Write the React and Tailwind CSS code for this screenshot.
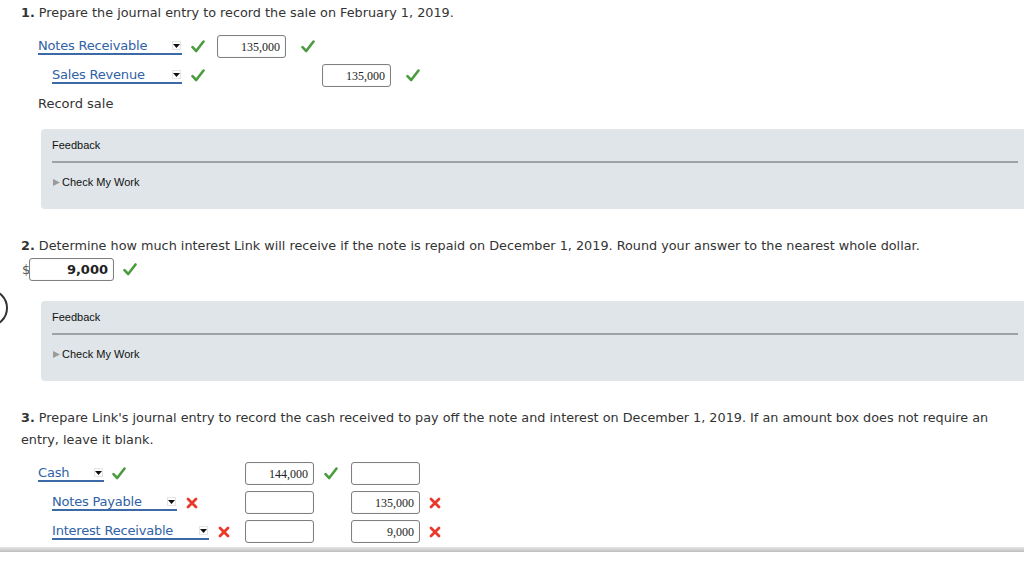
import React from "react";

const Check = () => (
  <svg width="14" height="13" viewBox="0 0 14 13" className="shrink-0">
    <path d="M1.5 7.2 L5.2 11 L12.5 1.5" fill="none" stroke="#4b9b3f" strokeWidth="2.6" strokeLinecap="round" strokeLinejoin="round" />
  </svg>
);

const Cross = () => (
  <svg width="12" height="12" viewBox="0 0 12 12" className="shrink-0">
    <path d="M2 2 L10 10 M10 2 L2 10" fill="none" stroke="#e8392b" strokeWidth="2.8" strokeLinecap="round" />
  </svg>
);

function Select({ label, width }) {
  return (
    <div className={`flex items-center justify-between h-[17px] border-b-2 border-[#3b6aa7] ${width}`}>
      <span className="text-[13px] leading-[15px] text-[#2f62a6] font-['DejaVu_Sans',sans-serif] tracking-[-0.2px]">{label}</span>
      <span className="w-[9px] h-[9px] bg-white border border-[#e4e4e4] flex items-center justify-center mr-[1px]">
        <svg width="7" height="4" viewBox="0 0 7 4"><path d="M0 0 H7 L3.5 4 Z" fill="#111" /></svg>
      </span>
    </div>
  );
}

function Amount({ value, bold }) {
  return (
    <div className={`h-[23px] border border-[#808080] rounded-[3px] bg-white shadow-[inset_0_0_1px_rgba(0,0,0,0.2)] flex items-center justify-end pr-[5px] ${bold ? "w-[85px]" : "w-[69px]"}`}>
      <span className={bold ? "text-[13px] font-bold text-[#222] font-['DejaVu_Sans',sans-serif]" : "text-[12px] text-[#222] font-['Liberation_Serif',serif]"}>{value}</span>
    </div>
  );
}

function Feedback({ className }) {
  return (
    <div className={`ml-[41px] mr-[-10px] h-[80px] bg-[#dfe5e8] rounded-[4px] pl-[11px] pr-[16px] font-['Liberation_Sans',sans-serif] text-[11px] text-[#111] ${className}`}>
      <div className="h-[32px] pt-[10px] leading-[12px]">Feedback</div>
      <div className="border-t-2 border-[#9ea2a5]" />
      <div className="mt-[13px] flex items-center leading-[12px]">
        <svg width="9" height="9" viewBox="0 0 9 9" className="mr-[1px]"><path d="M1 1 L8 4.5 L1 8 Z" fill="#9a9a9a" /></svg>
        Check My Work
      </div>
    </div>
  );
}

export default function App() {
  return (
    <div className="relative w-[1024px] h-[566px] overflow-hidden bg-white text-[#333] font-['DejaVu_Sans',sans-serif] text-[13px]">
      {/* partial circle at left edge */}
      <div className="absolute left-[-30px] top-[289px] w-[38px] h-[38px] rounded-full border-[2.5px] border-[#333]" />

      <div className="pl-[21px] pt-[2px] leading-[22px] text-[12.8px]">
        <b>1.</b> Prepare the journal entry to record the sale on February 1, 2019.
      </div>

      <div className="mt-[11px] flex items-center h-[23px] pl-[38px]">
        <div className="w-[179px] flex items-center">
          <Select label="Notes Receivable" width="w-[144px]" />
          <span className="ml-[9px]"><Check /></span>
        </div>
        <div className="w-[105px] flex items-center">
          <Amount value="135,000" />
          <span className="ml-[15px]"><Check /></span>
        </div>
      </div>

      <div className="mt-[6px] flex items-center h-[23px] pl-[38px]">
        <div className="w-[179px] flex items-center pl-[14px]">
          <Select label="Sales Revenue" width="w-[130px]" />
          <span className="ml-[9px]"><Check /></span>
        </div>
        <div className="w-[105px]" />
        <div className="flex items-center">
          <Amount value="135,000" />
          <span className="ml-[15px]"><Check /></span>
        </div>
      </div>

      <div className="mt-[8px] pl-[38px] leading-[18px]">Record sale</div>

      <Feedback className="mt-[16px]" />

      <div className="mt-[26px] pl-[21px] leading-[22px] text-[12.8px]">
        <b>2.</b> Determine how much interest Link will receive if the note is repaid on December 1, 2019. Round your answer to the nearest whole dollar.
      </div>

      <div className="mt-[1px] flex items-center pl-[22px]">
        <span className="w-[7px] text-[13px] text-[#555]">$</span>
        <Amount value="9,000" bold />
        <span className="ml-[9px]"><Check /></span>
      </div>

      <Feedback className="mt-[20px]" />

      <div className="mt-[26px] pl-[21px] pr-[12px] leading-[22px] text-[12.8px]">
        <b>3.</b> Prepare Link's journal entry to record the cash received to pay off the note and interest on December 1, 2019. If an amount box does not require an entry, leave it blank.
      </div>

      <div className="mt-[11px] flex items-center h-[23px] pl-[38px]">
        <div className="w-[207px] flex items-center">
          <Select label="Cash" width="w-[66px]" />
          <span className="ml-[8px]"><Check /></span>
        </div>
        <div className="w-[106px] flex items-center">
          <Amount value="144,000" />
          <span className="ml-[10px]"><Check /></span>
        </div>
        <Amount value="" />
      </div>

      <div className="mt-[6px] flex items-center h-[23px] pl-[38px]">
        <div className="w-[207px] flex items-center pl-[14px]">
          <Select label="Notes Payable" width="w-[125px]" />
          <span className="ml-[9px]"><Cross /></span>
        </div>
        <div className="w-[106px]">
          <Amount value="" />
        </div>
        <div className="flex items-center">
          <Amount value="135,000" />
          <span className="ml-[9px]"><Cross /></span>
        </div>
      </div>

      <div className="mt-[6px] flex items-center h-[23px] pl-[38px]">
        <div className="w-[207px] flex items-center pl-[14px]">
          <Select label="Interest Receivable" width="w-[157px]" />
          <span className="ml-[9px]"><Cross /></span>
        </div>
        <div className="w-[106px]">
          <Amount value="" />
        </div>
        <div className="flex items-center">
          <Amount value="9,000" />
          <span className="ml-[9px]"><Cross /></span>
        </div>
      </div>

      <div className="mt-[4px] h-[5px] bg-gradient-to-b from-[#e6e6e6] to-[#bdbdbd]" />
    </div>
  );
}
